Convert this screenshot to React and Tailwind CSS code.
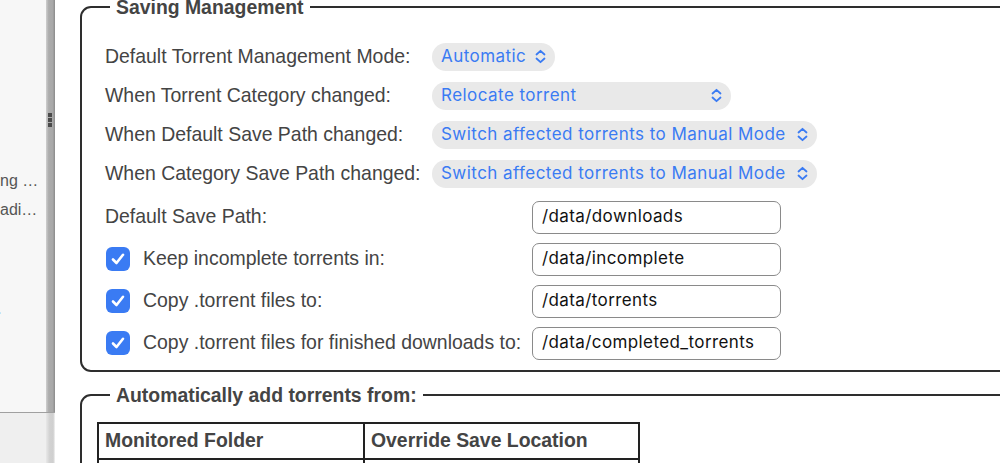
import React from "react";

const Chevron = () => (
  <svg width="11" height="15" viewBox="0 0 11 15" fill="none" stroke="#3a7bf3" strokeWidth="1.8" strokeLinecap="round" strokeLinejoin="round">
    <path d="M1.5 5.5 L5.5 1.8 L9.5 5.5" />
    <path d="M1.5 9.5 L5.5 13.2 L9.5 9.5" />
  </svg>
);

const Pill = ({ text, w }) => (
  <div
    className="h-[28px] rounded-full bg-[#e9e9e9] pl-[9px] pr-[9px] flex items-center justify-between text-[#3a7bf3] text-[17px] tracking-[0.45px] font-['Inter',sans-serif] whitespace-nowrap"
    style={{ width: w }}
  >
    <span>{text}</span>
    <Chevron />
  </div>
);

const Check = () => (
  <div className="w-[24px] h-[24px] rounded-[6px] bg-[#3a7bf3] flex items-center justify-center shrink-0">
    <svg width="16" height="16" viewBox="0 0 16 16" fill="none" stroke="white" strokeWidth="2.6" strokeLinecap="round" strokeLinejoin="round">
      <path d="M3 8.5 L6.5 12 L13 3.8" />
    </svg>
  </div>
);

const Input = ({ value }) => (
  <div className="w-[249px] h-[33px] rounded-[7px] border-[1.5px] border-[#8a8a8a] pl-[9px] flex items-center text-[17px] tracking-[0.4px] text-[#111] font-['Inter',sans-serif] whitespace-nowrap">
    {value}
  </div>
);

export default function App() {
  const selRows = [
    ["Default Torrent Management Mode:", "Automatic", 123],
    ["When Torrent Category changed:", "Relocate torrent", 299],
    ["When Default Save Path changed:", "Switch affected torrents to Manual Mode", 385],
    ["When Category Save Path changed:", "Switch affected torrents to Manual Mode", 385],
  ];
  const pathRows = [
    [false, "Default Save Path:", "/data/downloads"],
    [true, "Keep incomplete torrents in:", "/data/incomplete"],
    [true, "Copy .torrent files to:", "/data/torrents"],
    [true, "Copy .torrent files for finished downloads to:", "/data/completed_torrents"],
  ];
  return (
    <div className="w-[1000px] h-[463px] overflow-hidden flex bg-white font-['Liberation_Sans',Arial,sans-serif]">
      {/* left panel */}
      <div className="w-[46px] h-full flex flex-col shrink-0">
        <div className="h-[413px] bg-[#f7f7f7] border-b border-[#a0a0a0] pt-[166px] text-[16px] text-[#555] whitespace-nowrap overflow-hidden">
          <div className="h-[29px] leading-[29px]">ng …</div>
          <div className="h-[29px] leading-[29px]">adi…</div>
          <div className="mt-[70px] h-[29px] leading-[29px] -ml-[3px]">.</div>
        </div>
        <div className="flex-1 bg-[#efefef]" />
      </div>
      {/* splitter */}
      <div className="w-[9px] h-full flex flex-col shrink-0">
        <div className="h-[413px] relative bg-[linear-gradient(to_right,#cfcfcf,#acacac_30%,#a8a8a8_75%,#8a8a8a)] border-b border-[#a0a0a0]">
          <div className="absolute left-[2px] top-[113px] flex flex-col gap-[1px]">
            <div className="w-[4px] h-[4px] bg-[#4a4a4a]" />
            <div className="w-[4px] h-[4px] bg-[#4a4a4a]" />
            <div className="w-[4px] h-[4px] bg-[#4a4a4a]" />
          </div>
        </div>
        <div className="flex-1 bg-[linear-gradient(to_right,#e8e8e8,#d2d2d2_40%,#cfcfcf_80%,#f4f4f4)]" />
      </div>
      {/* main */}
      <div className="flex-1 pl-[25px] -mt-[4px] overflow-hidden">
        <fieldset className="w-[1000px] border-2 border-[#2e2e2e] rounded-[11px] pl-[23px] pb-[6px]">
          <legend className="ml-[5px] px-[6px] text-[19.4px] leading-[22px] font-bold text-[#444]">Saving Management</legend>
          <div className="pt-[19px] flex flex-col">
            {selRows.map(([l, t, w], i) => (
              <div key={i} className="h-[39px] flex items-center">
                <div className="w-[327px] text-[19.45px] text-[#444] whitespace-nowrap">{l}</div>
                <Pill text={t} w={w} />
              </div>
            ))}
          </div>
          <div className="pt-[3px] flex flex-col">
            {pathRows.map(([c, l, v], i) => (
              <div key={i} className="h-[42px] flex items-center">
                <div className="w-[427px] flex items-center text-[19.45px] text-[#444] whitespace-nowrap">
                  {c ? (
                    <>
                      <div className="ml-[1px]"><Check /></div>
                      <span className="ml-[13px]">{l}</span>
                    </>
                  ) : (
                    <span>{l}</span>
                  )}
                </div>
                <Input value={v} />
              </div>
            ))}
          </div>
        </fieldset>
        <fieldset className="mt-[12px] w-[1000px] border-2 border-[#2e2e2e] rounded-[11px] pl-[15px] pb-[20px]">
          <legend className="ml-[13px] px-[6px] text-[19.4px] leading-[22px] font-bold text-[#444]">Automatically add torrents from:</legend>
          <table className="mt-[16px] w-[543px] border-2 border-[#222] border-collapse text-[19.4px] font-bold text-[#444]">
            <thead>
              <tr className="h-[36px]">
                <th className="w-[266px] border-2 border-[#222] text-left pl-[6px] font-bold">Monitored Folder</th>
                <th className="border-2 border-[#222] text-left pl-[6px] font-bold">Override Save Location</th>
              </tr>
            </thead>
            <tbody>
              <tr className="h-[36px]">
                <td className="border-2 border-[#222]" />
                <td className="border-2 border-[#222]" />
              </tr>
            </tbody>
          </table>
        </fieldset>
      </div>
    </div>
  );
}
